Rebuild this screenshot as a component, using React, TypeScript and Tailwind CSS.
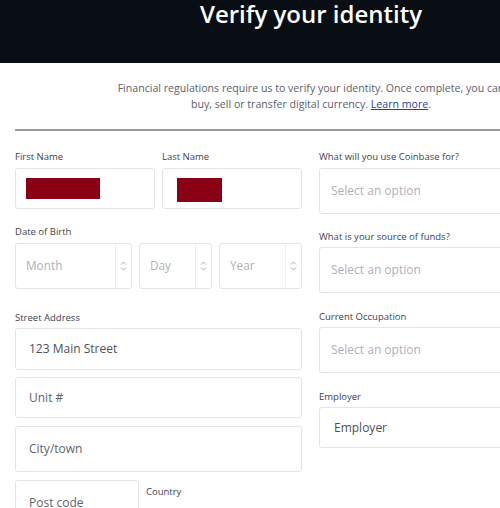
const font = { fontFamily: '"Open Sans", "Noto Sans", sans-serif' };

function Label({ children, className = "" }: { children: React.ReactNode; className?: string }) {
  return <div className={`text-[9.5px] leading-[12px] text-[#3d4350] ${className}`}>{children}</div>;
}

function Box({
  children,
  className = "",
}: {
  children?: React.ReactNode;
  className?: string;
}) {
  return (
    <div className={`flex items-center rounded-[3px] border border-[#e3e5e8] bg-white ${className}`}>{children}</div>
  );
}

function Spinner() {
  return (
    <div className="flex h-full w-[16px] items-center justify-center border-l border-[#eceef0]">
      <svg width="7" height="12" viewBox="0 0 7 12" fill="none" stroke="#a9adb3" strokeWidth="1">
        <path d="M1 4.5 L3.5 2 L6 4.5" />
        <path d="M1 7.5 L3.5 10 L6 7.5" />
      </svg>
    </div>
  );
}

function DateSelect({ text, w }: { text: string; w: string }) {
  return (
    <Box className={`h-[46px] ${w}`}>
      <span className="flex-1 pl-[10px] text-[11.8px] text-[#aeb2b8]">{text}</span>
      <Spinner />
    </Box>
  );
}

export default function App() {
  return (
    <div className="h-[508px] w-[500px] overflow-hidden bg-white" style={font}>
      <div className="w-[622px]">
        <header className="flex h-[63px] justify-center bg-[#090d14]">
          <h1 className="mt-[-2px] text-[24px] font-semibold leading-[32px] text-white">Verify your identity</h1>
        </header>

        <p className="mt-[17px] text-center text-[10.6px] leading-[16px] text-[#5b616b]">
          Financial regulations require us to verify your identity. Once complete, you can
          <br />
          buy, sell or transfer digital currency.{" "}
          <a href="#" className="text-[#1f3fae] underline">
            Learn more
          </a>
          .
        </p>

        <div className="mx-[15px] mt-[17px] h-[2px] bg-[#9a9a9a]" />

        <div className="mt-[20px] flex gap-[17px] px-[15px]">
          {/* left column */}
          <div className="w-[287px]">
            <div className="flex gap-[7px]">
              <div className="w-[140px]">
                <Label>First Name</Label>
                <Box className="mt-[5px] h-[41px] border-[#b7c3d6] pl-[10px]">
                  <div className="h-[21px] w-[74px] bg-[#8a0015]" />
                </Box>
              </div>
              <div className="w-[140px]">
                <Label>Last Name</Label>
                <Box className="mt-[5px] h-[41px] pl-[14px]">
                  <div className="mt-[3px] h-[24px] w-[45px] bg-[#8a0015]" />
                </Box>
              </div>
            </div>

            <Label className="mt-[17px]">Date of Birth</Label>
            <div className="mt-[5px] flex gap-[7px]">
              <DateSelect text="Month" w="w-[117px]" />
              <DateSelect text="Day" w="w-[73px]" />
              <DateSelect text="Year" w="w-[83px]" />
            </div>

            <Label className="mt-[23px]">Street Address</Label>
            <div className="mt-[4px] flex flex-col gap-[7px]">
              <Box className="h-[42px] pl-[13px]">
                <span className="text-[12px] text-[#4c5159]">123 Main Street</span>
              </Box>
              <Box className="h-[41px] pl-[13px]">
                <span className="text-[12px] text-[#5f646c]">Unit #</span>
              </Box>
              <Box className="mt-[1px] h-[46px] pl-[13px]">
                <span className="text-[12px] text-[#5f646c]">City/town</span>
              </Box>
              <div className="mt-[1px] flex gap-[7px]">
                <Box className="h-[46px] w-[124px] pl-[13px]">
                  <span className="text-[12px] text-[#5f646c]">Post code</span>
                </Box>
                <div className="pt-[6px]">
                  <Label>Country</Label>
                  <div className="mt-[6px] text-[11.5px] text-[#aeb2b8]">Select a Country</div>
                </div>
              </div>
            </div>
          </div>

          {/* right column */}
          <div className="w-[288px]">
            <Label>What will you use Coinbase for?</Label>
            <Box className="mt-[5px] h-[46px] pl-[11px]">
              <span className="text-[12px] text-[#aeb2b8]">Select an option</span>
            </Box>

            <Label className="mt-[17px]">What is your source of funds?</Label>
            <Box className="mt-[4px] h-[46px] pl-[11px]">
              <span className="text-[12px] text-[#aeb2b8]">Select an option</span>
            </Box>

            <Label className="mt-[18px]">Current Occupation</Label>
            <Box className="mt-[4px] h-[46px] pl-[11px]">
              <span className="text-[12px] text-[#aeb2b8]">Select an option</span>
            </Box>

            <Label className="mt-[18px]">Employer</Label>
            <Box className="mt-[4px] h-[41px] pl-[14px]">
              <span className="text-[12px] text-[#4c5159]">Employer</span>
            </Box>
          </div>
        </div>
      </div>
    </div>
  );
}
